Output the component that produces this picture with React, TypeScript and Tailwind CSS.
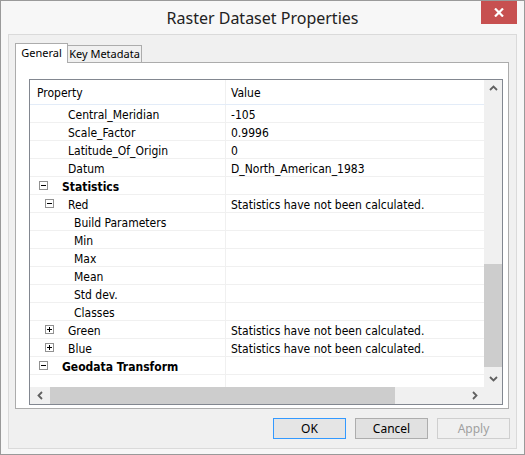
import React from 'react';

type Row = {
    label: string;
    value?: string;
    indent: number; // text left offset inside the property column
    bold?: boolean;
    box?: 'minus' | 'plus';
    boxAt?: number;
};

const rows: Row[] = [
    { label: 'Central_Meridian', value: '-105', indent: 38 },
    { label: 'Scale_Factor', value: '0.9996', indent: 38 },
    { label: 'Latitude_Of_Origin', value: '0', indent: 38 },
    { label: 'Datum', value: 'D_North_American_1983', indent: 38 },
    { label: 'Statistics', indent: 32, bold: true, box: 'minus', boxAt: 9 },
    { label: 'Red', value: 'Statistics have not been calculated.', indent: 38, box: 'minus', boxAt: 15 },
    { label: 'Build Parameters', indent: 44 },
    { label: 'Min', indent: 44 },
    { label: 'Max', indent: 44 },
    { label: 'Mean', indent: 44 },
    { label: 'Std dev.', indent: 44 },
    { label: 'Classes', indent: 44 },
    { label: 'Green', value: 'Statistics have not been calculated.', indent: 38, box: 'plus', boxAt: 15 },
    { label: 'Blue', value: 'Statistics have not been calculated.', indent: 38, box: 'plus', boxAt: 15 },
    { label: 'Geodata Transform', indent: 32, bold: true, box: 'minus', boxAt: 9 },
    { label: '', indent: 38 },
];

const ui = { fontFamily: '"Segoe UI", "Noto Sans", "Liberation Sans", sans-serif' };
const grid = { fontFamily: 'Tahoma, "DejaVu Sans Condensed", "Liberation Sans", sans-serif' };

function ExpandBox({ kind }: { kind: 'minus' | 'plus' }) {
    return (
        <span className="relative block h-[9px] w-[9px] border border-[#919191] bg-white">
            <span className="absolute left-[1px] top-[3px] h-[1px] w-[5px] bg-[#000]" />
            {kind === 'plus' && <span className="absolute left-[3px] top-[1px] h-[5px] w-[1px] bg-[#000]" />}
        </span>
    );
}

function Chevron({ dir }: { dir: 'up' | 'down' | 'left' | 'right' }) {
    const d = {
        up: 'M1 6 L4.5 2.5 L8 6',
        down: 'M1 3 L4.5 6.5 L8 3',
        left: 'M6 1 L2.5 4.5 L6 8',
        right: 'M3 1 L6.5 4.5 L3 8',
    }[dir];
    return (
        <svg width="9" height="9" viewBox="0 0 9 9">
            <path d={d} fill="none" stroke="#606060" strokeWidth="1.8" />
        </svg>
    );
}

export default function App() {
    return (
        <div className="flex h-[455px] w-[525px] flex-col border border-[#9a9a9a] bg-[#f7f7f7] text-black">
            {/* title bar */}
            <div className="relative flex h-[33px] shrink-0 items-center justify-center">
                <span className="pt-[1px] text-[16px] text-[#222]" style={ui}>
                    Raster Dataset Properties
                </span>
                <div className="absolute right-[7px] top-0 flex h-[23px] w-[36px] items-center justify-center bg-[#c75050]">
                    <svg width="10" height="9" viewBox="0 0 10 9">
                        <path d="M1 0.5 L9 8.5 M9 0.5 L1 8.5" stroke="#fff" strokeWidth="2.2" />
                    </svg>
                </div>
            </div>

            {/* client area */}
            <div className="mx-[7px] flex h-[415px] flex-col border border-[#dadada] bg-[#f0f0f0] pl-[6px] pr-[6px] pt-[8px]">
                {/* tabs */}
                <div className="flex h-[19px] items-end whitespace-nowrap text-[11px]" style={ui}>
                    <div className="relative z-10 -mb-[1px] flex h-[20px] w-[53px] items-center justify-center border border-b-0 border-[#acacac] bg-white pb-[1px]">
                        General
                    </div>
                    <div className="flex h-[17px] w-[74px] items-center justify-center border border-b-0 border-l-0 border-[#acacac] bg-[#f0f0f0]">
                        Key Metadata
                    </div>
                </div>

                {/* tab page */}
                <div className="flex h-[347px] w-[494px] flex-col border border-[#acacac] bg-white pl-[13px] pt-[16px]">
                    <div className="flex h-[326px] w-[474px] flex-col border border-[#828790] bg-white text-[12px]" style={grid}>
                        <div className="flex min-h-0 flex-1 overflow-hidden">
                            {/* table */}
                            <div className="flex w-[454px] flex-col">
                                <div className="flex h-[25px] shrink-0 border-b border-[#e3ecf8]">
                                    <div className="flex w-[196px] items-center border-r border-[#f0f0f0] pl-[7px] pt-[2px]">Property</div>
                                    <div className="flex flex-1 items-center pl-[5px] pt-[2px]">Value</div>
                                </div>
                                {rows.map((r, i) => (
                                    <div key={i} className="flex h-[18px] shrink-0 border-b border-[#f0f0f0]">
                                        <div className="relative flex w-[196px] items-center border-r border-[#f0f0f0] pt-[2px]">
                                            {r.box && (
                                                <span className="absolute top-[4px]" style={{ left: r.boxAt }}>
                                                    <ExpandBox kind={r.box} />
                                                </span>
                                            )}
                                            <span className={r.bold ? 'font-bold' : ''} style={{ paddingLeft: r.indent }}>
                                                {r.label}
                                            </span>
                                        </div>
                                        <div className="flex flex-1 items-center pl-[5px] pt-[2px]">{r.value}</div>
                                    </div>
                                ))}
                            </div>
                            {/* vertical scrollbar */}
                            <div className="flex w-[18px] flex-col bg-[#f0f0f0]">
                                <div className="flex h-[17px] items-center justify-center">
                                    <Chevron dir="up" />
                                </div>
                                <div className="flex flex-1 flex-col">
                                    <div className="h-[167px]" />
                                    <div className="h-[103px] bg-[#cdcdcd]" />
                                    <div className="flex-1" />
                                </div>
                                <div className="flex h-[17px] items-center justify-center">
                                    <Chevron dir="down" />
                                </div>
                            </div>
                        </div>
                        {/* horizontal scrollbar */}
                        <div className="flex h-[17px] shrink-0 bg-[#f0f0f0]">
                            <div className="flex w-[20px] items-center justify-center">
                                <Chevron dir="left" />
                            </div>
                            <div className="w-[345px] bg-[#cdcdcd]" />
                            <div className="flex-1" />
                            <div className="flex w-[20px] items-center justify-center">
                                <Chevron dir="right" />
                            </div>
                            <div className="w-[18px]" />
                        </div>
                    </div>
                </div>

                {/* buttons */}
                <div className="mt-[9px] flex justify-end gap-[9px] text-[12px]" style={ui}>
                    <button className="h-[21px] w-[73px] border border-[#3399ff] bg-[#e5e5e5]">OK</button>
                    <button className="h-[21px] w-[73px] border border-[#adadad] bg-[#e1e1e1]">Cancel</button>
                    <button className="h-[21px] w-[73px] border border-[#cfcfcf] bg-[#f0f0f0] text-[#a0a0a0]">Apply</button>
                </div>
            </div>
        </div>
    );
}
